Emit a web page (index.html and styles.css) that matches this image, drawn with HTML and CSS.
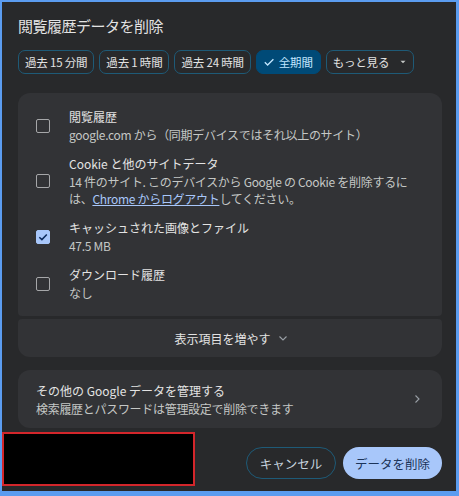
FILE: index.html
```html
<!DOCTYPE html>
<html lang="ja">
<head>
<meta charset="utf-8">
<title>閲覧履歴データを削除</title>
<link rel="stylesheet" href="styles.css">
</head>
<body>
<div class="dialog">
  <h1 class="dialog-title">閲覧履歴データを削除</h1>

  <div class="chips">
    <button class="chip">過去 15 分間</button>
    <button class="chip">過去 1 時間</button>
    <button class="chip">過去 24 時間</button>
    <button class="chip chip-selected">
      <svg class="chip-check" viewBox="0 0 12 12" width="12" height="12"><path d="M1.8 6.3 L4.6 9 L10.4 3.2" fill="none" stroke="currentColor" stroke-width="1.3"/></svg>
      全期間
    </button>
    <button class="chip">もっと見る
      <svg class="chip-caret" viewBox="0 0 8 8" width="8" height="8"><path d="M1.5 2.8 H6.5 L4 5.3 Z" fill="currentColor"/></svg>
    </button>
  </div>

  <div class="group">
    <div class="card card-top">
      <label class="item">
        <span class="box"></span>
        <span class="item-text">
          <span class="item-title">閲覧履歴</span>
          <span class="item-sub">google.com から（同期デバイスではそれ以上のサイト）</span>
        </span>
      </label>
      <label class="item">
        <span class="box"></span>
        <span class="item-text">
          <span class="item-title">Cookie と他のサイトデータ</span>
          <span class="item-sub">14 件のサイト. このデバイスから Google の Cookie を削除するに<br>は、<a class="link" href="#">Chrome からログアウト</a>してください。</span>
        </span>
      </label>
      <label class="item">
        <span class="box box-checked">
          <svg viewBox="0 0 14 14" width="14" height="14"><path d="M3.3 7.2 L5.9 9.6 L10.8 4.4" fill="none" stroke="#0b2a5c" stroke-width="1.5"/></svg>
        </span>
        <span class="item-text">
          <span class="item-title">キャッシュされた画像とファイル</span>
          <span class="item-sub">47.5 MB</span>
        </span>
      </label>
      <label class="item">
        <span class="box"></span>
        <span class="item-text">
          <span class="item-title">ダウンロード履歴</span>
          <span class="item-sub">なし</span>
        </span>
      </label>
    </div>
    <button class="card card-bottom expand">
      表示項目を増やす
      <svg class="expand-icon" viewBox="0 0 10 10" width="10" height="10"><path d="M1.5 3.5 L5 7 L8.5 3.5" fill="none" stroke="currentColor" stroke-width="1.1"/></svg>
    </button>
  </div>

  <a class="card manage" href="#">
    <span class="manage-text">
      <span class="item-title">その他の Google データを管理する</span>
      <span class="item-sub">検索履歴とパスワードは管理設定で削除できます</span>
    </span>
    <svg class="manage-arrow" viewBox="0 0 10 10" width="10" height="10"><path d="M3.5 1.5 L7 5 L3.5 8.5" fill="none" stroke="currentColor" stroke-width="1.1"/></svg>
  </a>

  <div class="footer">
    <button class="btn btn-outline">キャンセル</button>
    <button class="btn btn-filled">データを削除</button>
  </div>

  <div class="redaction"></div>
</div>
</body>
</html>
```

FILE: styles.css
```css
* {
  box-sizing: border-box;
}

html, body {
  margin: 0;
  height: 100%;
}

body {
  background: #5b9cf0;
  font-family: "Noto Sans CJK JP", "Noto Sans", sans-serif;
  color: #e3e3e3;
  padding: 2px 3px 5px 2px;
}

.dialog {
  position: relative;
  height: 489px;
  background: #28292b;
  padding: 14px 14px 12px 16px;
  display: flex;
  flex-direction: column;
}

.dialog-title {
  margin: 0;
  font-size: 15px;
  font-weight: 400;
  line-height: 20px;
  letter-spacing: -0.5px;
  color: #e3e3e3;
}

/* time range chips */
.chips {
  display: flex;
  gap: 5px;
  margin-top: 14px;
}

.chip {
  height: 24px;
  padding: 0 6px;
  border: 1px solid #1e5a77;
  border-radius: 7px;
  background: transparent;
  color: #e3e3e3;
  font: inherit;
  font-size: 11.5px;
  letter-spacing: -0.2px;
  display: flex;
  align-items: center;
  gap: 4px;
  white-space: nowrap;
}

.chip-selected {
  background: #004a77;
  border-color: #004a77;
  color: #c2e7ff;
  padding: 0 7px 0 6px;
}

.chip-caret {
  margin-left: 6px;
  color: #c4c7c5;
}

/* cards */
.group {
  margin-top: 19px;
  display: flex;
  flex-direction: column;
  gap: 3px;
}

.card {
  background: #323336;
  border-radius: 12px;
}

.card-top {
  border-radius: 12px 12px 4px 4px;
  height: 223px;
  padding: 15px 18px 15px 18px;
  display: flex;
  flex-direction: column;
  gap: 12px;
}

.card-bottom {
  border-radius: 4px 4px 12px 12px;
}

.item {
  display: flex;
  align-items: center;
  gap: 19px;
}

.box {
  flex: none;
  width: 14px;
  height: 14px;
  border: 1.5px solid #a6a7a9;
  border-radius: 2px;
  display: flex;
  align-items: center;
  justify-content: center;
}

.box-checked {
  background: #a8c7fa;
  border-color: #a8c7fa;
}

.box-checked svg {
  flex: none;
}

.item-text,
.manage-text {
  display: flex;
  flex-direction: column;
}

.item-title {
  font-size: 12px;
  line-height: 18px;
  color: #e3e3e3;
  white-space: nowrap;
}

.item-sub {
  font-size: 12px;
  line-height: 17px;
  letter-spacing: -0.3px;
  color: #c4c7c5;
  white-space: nowrap;
}

.link {
  color: #a8c7fa;
  text-decoration: underline;
}

.expand {
  height: 38px;
  border: 0;
  font: inherit;
  font-size: 12px;
  color: #e3e3e3;
  display: flex;
  align-items: center;
  justify-content: center;
  gap: 7px;
  padding: 0 0 0 2px;
}

.expand-icon {
  color: #9aa0a6;
}

.manage {
  margin-top: 13px;
  height: 58px;
  padding: 0 20px 0 18px;
  display: flex;
  align-items: center;
  justify-content: space-between;
  text-decoration: none;
}

.manage-arrow {
  color: #9aa0a6;
}

/* actions */
.footer {
  margin-top: 19px;
  display: flex;
  justify-content: flex-end;
  gap: 7px;
}

.btn {
  height: 32px;
  border-radius: 16px;
  font: inherit;
  font-size: 12.5px;
  padding: 0;
}

.btn-outline {
  width: 90px;
  background: transparent;
  border: 1px solid #1e5a77;
  color: #c7d3df;
}

.btn-filled {
  width: 99px;
  background: #a8c7fa;
  border: 0;
  color: #1b3358;
}

/* blacked-out area in the lower left */
.redaction {
  position: absolute;
  left: 0;
  top: 430px;
  width: 193px;
  height: 54px;
  background: #000;
  border: 2px solid #d3262b;
}
```
